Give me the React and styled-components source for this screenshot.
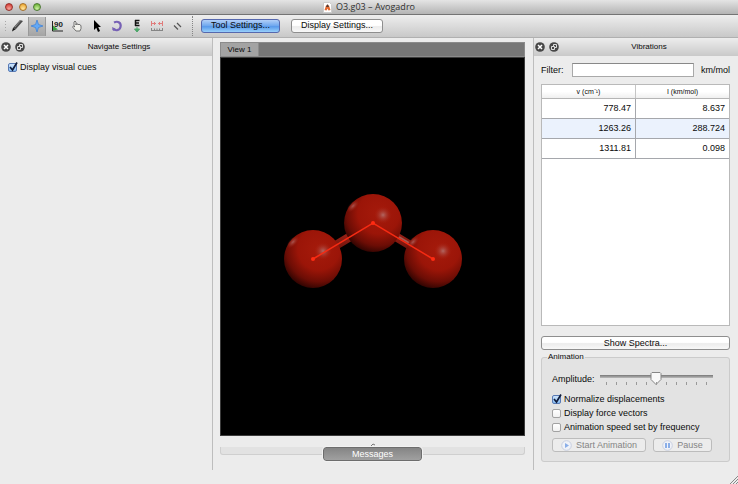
import React, { useState } from "react";
import styled, { createGlobalStyle, css } from "styled-components";

const GlobalStyle = createGlobalStyle`
  * { box-sizing: border-box; }
  body { margin: 0; background: #ececec; }
  body, button, input, table {
    font-family: "Liberation Sans", Arial, sans-serif;
    font-size: 9px;
    line-height: 12px;
    color: #0a0a0a;
  }
`;

const Window = styled.div`
  display: flex;
  flex-direction: column;
  min-height: 100vh;
  background: #ececec;
`;

const TitleBar = styled.header`
  display: grid;
  grid-template-columns: 1fr auto 1fr;
  align-items: center;
  height: 15px;
  padding: 0 5px;
  background: linear-gradient(#e4e4e4, #b4b4b4);
  border-bottom: 1px solid #747474;
`;

const Lights = styled.div`
  display: flex;
  gap: 6px;
`;

const lightColors = {
  close: ["#f6a79d", "#d8423b", "#96312b"],
  minimize: ["#ffe6a1", "#edaa35", "#a5702a"],
  zoom: ["#cdf2a4", "#72b63c", "#4d7b33"],
};

const Light = styled.button`
  width: 8px;
  height: 8px;
  padding: 0;
  border-radius: 50%;
  border: 1px solid ${(p) => lightColors[p.$kind][2]};
  background: radial-gradient(circle at 50% 80%, ${(p) => lightColors[p.$kind][0]}, ${(p) => lightColors[p.$kind][1]} 80%);
`;

const Title = styled.h1`
  display: flex;
  align-items: center;
  gap: 4px;
  margin: 0;
  font: 9px/14px "Open Sans", "Lucida Grande", sans-serif;
  color: #303030;
`;

const Toolbar = styled.div`
  display: flex;
  align-items: center;
  height: 23px;
  background: linear-gradient(#eeeeee, #c8c8c8);
  border-bottom: 1px solid #b0b0b0;
`;

const Grip = styled.span`
  width: 3px;
  height: 13px;
  margin: 0 1px 0 4px;
  background: radial-gradient(circle, #a8a8a8 1px, transparent 1px) 0 0 / 3px 3px;
`;

const Tool = styled.button`
  display: grid;
  place-items: center;
  width: 18px;
  height: 19px;
  margin-right: 2px;
  padding: 0;
  border: 0;
  background: ${(p) => (p.$active ? "linear-gradient(#c5c5c5, #a4a4a4)" : "none")};
  box-shadow: ${(p) => (p.$active ? "inset 1px 0 #999, inset -1px 0 #999" : "none")};
`;

const Separator = styled.span`
  height: 20px;
  margin: 0 8px 0 4px;
  border-left: 1px dotted #858585;
`;

const PushButton = styled.button`
  display: flex;
  align-items: center;
  justify-content: center;
  gap: 4px;
  height: 14px;
  padding: 0 9px 1px;
  border: 1px solid #8e8e8e;
  border-radius: 3px;
  background: linear-gradient(#ffffff 45%, #ececec 55%, #f8f8f8);
  white-space: nowrap;
  svg { flex: none; }
  ${(p) => p.$primary && css`
    border-color: #5668ad;
    background: linear-gradient(#b2cff7, #6ca6ee 50%, #589aeb 55%, #98d0fb);
  `}
  ${(p) => p.$wide && css`width: 100%;`}
  &:disabled {
    padding: 0 4px;
    color: #858585;
    border-color: #bcbcbc;
    background: #ececec;
  }
`;

const ToolbarButtons = styled.div`
  display: flex;
  gap: 11px;
  padding-bottom: 1px;
`;

const Workspace = styled.main`
  display: grid;
  grid-template-columns: 213px minmax(0, 1fr) 205px;
  flex: 1;
  margin-bottom: 14px;
`;

const Dock = styled.aside`
  display: flex;
  flex-direction: column;
  min-width: 0;
  ${(p) => (p.$side === "left" ? "border-right" : "border-left")}: 1px solid #bdbdbd;
`;

const DockTitle = styled.div`
  display: grid;
  grid-template-columns: 26px 1fr;
  align-items: center;
  height: 18px;
  padding-bottom: 1px;
  background: linear-gradient(#ededed, #c9c9c9);
`;

const DockButtons = styled.div`
  display: flex;
  gap: 4px;
  padding-left: 1px;
`;

const RoundButton = styled.button`
  display: grid;
  flex: none;
  width: 10px;
  height: 10px;
  padding: 0;
  border: 0;
  background: none;
`;

const DockName = styled.h2`
  margin: 0;
  font-size: 8px;
  font-weight: normal;
  line-height: 12px;
  text-align: center;
`;

const LeftBody = styled.div`
  padding: 4px 8px;
`;

const RightBody = styled.div`
  display: flex;
  flex-direction: column;
  flex: 1;
  padding: 7px 8px 8px 7px;
`;

const CheckLabel = styled.label`
  display: flex;
  align-items: center;
  gap: 3px;
  height: 14px;
  white-space: nowrap;
`;

const CheckBox = styled.span`
  display: grid;
  > * { grid-area: 1 / 1; }
  svg { pointer-events: none; overflow: visible; }
`;

const Check = styled.input`
  appearance: none;
  width: 9px;
  height: 9px;
  margin: 0;
  border: 1px solid #a2a2a2;
  border-radius: 2px;
  background: linear-gradient(#fff, #f1f1f1);
  &:checked {
    border-color: #587ab5;
    background: linear-gradient(#cfe4fb, #86bdf3);
  }
`;

const Center = styled.section`
  display: flex;
  flex-direction: column;
  min-width: 0;
  padding: 4px 8px 9px 7px;
`;

const TabBar = styled.div`
  display: flex;
  height: 15px;
  background: #777777;
  border: 1px solid #8b8b8b;
`;

const Tab = styled.button`
  width: 38px;
  padding: 0;
  border: 0;
  border-right: 1px solid #8c8c8c;
  background: #a3a3a3;
  font-size: 8px;
`;

const Viewport = styled.div`
  display: grid;
  flex: 1;
  background: #000;
  border: 1px solid #3c3c3c;
  svg { width: 100%; height: 100%; }
`;

const Collapser = styled.div`
  display: grid;
  place-items: center;
  height: 11px;
  padding-top: 6px;
`;

const MessagesBar = styled.div`
  display: flex;
  justify-content: center;
  align-items: flex-start;
  height: 8px;
  margin-bottom: 6px;
  background: #e2e2e2;
  border: 1px solid #cfcfcf;
  border-top: 0;
  border-radius: 0 0 3px 3px;
`;

const MessagesButton = styled.button`
  flex: none;
  width: 99px;
  height: 14px;
  padding: 0;
  border: 1px solid #6d6d6d;
  border-radius: 3px;
  background: linear-gradient(#858585, #a0a0a0);
  color: #fff;
  outline: 1px solid #f2f2f2;
`;

const FilterRow = styled.label`
  display: grid;
  grid-template-columns: 24px 1fr auto;
  gap: 7px;
  align-items: center;
`;

const FilterInput = styled.input`
  width: 100%;
  min-width: 0;
  height: 14px;
  border: 1px solid #a9a9a9;
  border-top-color: #888;
  background: #fff;
  padding: 0 2px;
`;

const TableFrame = styled.div`
  flex: 1;
  margin: 7px 0 10px;
  border: 1px solid #b9b9b9;
  background: #fff;
`;

const Table = styled.table`
  width: 100%;
  table-layout: fixed;
  border-collapse: collapse;
  th {
    height: 13px;
    padding: 0;
    font-size: 7px;
    line-height: 9px;
    font-weight: normal;
    background: linear-gradient(#fff 50%, #efefef);
    border-bottom: 1px solid #b5b5b5;
  }
  th + th { border-left: 1px solid #c5c5c5; }
  td {
    height: 20px;
    padding: 0 4px;
    text-align: right;
    border-bottom: 1px solid #a5a7ac;
  }
  td + td { border-left: 1px solid #a5a7ac; }
  tbody tr:nth-child(even) { background: #ebf2fd; }
`;

const Group = styled.fieldset`
  min-width: 0;
  margin: 2px 0 0;
  padding: 10px 8px 9px 10px;
  border: 1px solid #cbcbcb;
  border-radius: 3px;
  background: #e3e3e3;
`;

const Legend = styled.legend`
  padding: 0 1px;
  margin-left: -5px;
  font-size: 8px;
  line-height: 10px;
`;

const AmplitudeRow = styled.label`
  display: flex;
  align-items: center;
  gap: 5px;
  margin-bottom: 7px;
  padding-right: 8px;
`;

const SliderBox = styled.span`
  display: grid;
  flex: 1;
  min-width: 0;
`;

const Slider = styled.input`
  appearance: none;
  width: 100%;
  height: 13px;
  margin: 0;
  background: linear-gradient(#777, #bbb) center 3px / 100% 3px no-repeat;
  &::-webkit-slider-thumb {
    appearance: none;
    width: 12px;
    height: 13px;
    background: url("data:image/svg+xml,%3Csvg xmlns='http://www.w3.org/2000/svg' viewBox='0 0 12 13'%3E%3Cpath d='M2 .5h8l1 1v6L6 12.5 1 7.5v-6z' fill='%23f8f8f8' stroke='%23858585'/%3E%3C/svg%3E");
  }
`;

const Ticks = styled.span`
  display: flex;
  justify-content: space-between;
  margin-top: -3px;
  padding: 0 6px;
`;

const Tick = styled.i`
  width: 1px;
  height: 3px;
  background: #999;
`;

const ButtonRow = styled.div`
  display: grid;
  grid-template-columns: 94px 59px;
  gap: 7px;
  margin-top: 4px;
`;

const Resize = styled.svg`
  position: fixed;
  right: 0;
  bottom: 0;
`;

function Icon({ children }) {
  return <svg width="16" height="16" viewBox="0 0 16 16" fill="none">{children}</svg>;
}

const tools = [
  ["Draw", <Icon><path d="M4 10l7-8 3 1-7 8z" fill="#4a4a4a" /><path d="M6 9l6-7" stroke="#8a8a8a" /><path d="M4 10l3 1-4 2.500z" fill="#111" /></Icon>],
  ["Navigate", <Icon><path d="M8 2l1.500 4.500L14 8 9.500 9.500 8 14 6.500 9.500 2 8l4.500-1.500z" fill="#64a9f5" stroke="#3b7fd7" strokeWidth=".7" /></Icon>],
  ["Bond centric", <Icon><path d="M3.500 3v10H14" stroke="#222" /><path d="M4 12.500l5-1-5-4z" fill="#39a641" /><text x="5" y="9" fontFamily="Liberation Sans" fontSize="8" fontWeight="bold" fill="#222">90</text></Icon>],
  ["Manipulate", <Icon><path d="M5 8V4l1-1 1 1v3-1h2v1l1-1 1 1 1 .5v3L11 13H7L3.500 9l1-1 1.500 1z" fill="#f2f2ed" stroke="#666" strokeWidth=".9" /></Icon>],
  ["Select", <Icon><path d="M5 2v10l2.300-2.200L9 14l2-1-1.800-4H12z" fill="#000" /></Icon>],
  ["Auto rotate", <Icon><path d="M5 4.500C9 2.500 12.500 5 11.500 9S6 13 4 10.500" stroke="#7761b5" strokeWidth="2.200" /><path d="M3 9l1 4 3-2z" fill="#7761b5" /></Icon>],
  ["Auto optimize", <Icon><path d="M6 2.500h4.500M6 5h4M6 7.500h4.500M6.500 2v6" stroke="#111" strokeWidth="1.500" /><path d="M8 9v3M5.500 11L8 14l2.500-3z" stroke="#4da76a" fill="#4da76a" /></Icon>],
  ["Measure", <Icon><path d="M2.500 3v5M13.500 3v5M3 5.500h4M9 5.500h4M5.500 4v3M10.500 4v3" stroke="#e07d7d" /><path d="M2 12.500h12M2.500 10v2M5.500 10.500v2M8 10.500v2M10.500 10.500v2M13.500 10v2" stroke="#858585" /></Icon>],
  ["Align", <Icon><path d="M5 7.500l4 4M8 5l4 4" stroke="#555" strokeWidth="1.200" /></Icon>],
];

function CheckItem({ label, initial = false }) {
  const [on, setOn] = useState(initial);
  return (
    <CheckLabel>
      <CheckBox>
        <Check type="checkbox" checked={on} onChange={() => setOn(!on)} />
        {on && <svg width="9" height="9" viewBox="0 0 9 9"><path d="M2 4l2.500 3L9 -.5" fill="none" stroke="#101c3c" strokeWidth="1.700" /></svg>}
      </CheckBox>
      {label}
    </CheckLabel>
  );
}

function DockHeader({ title }) {
  return (
    <DockTitle>
      <DockButtons>
        <RoundButton aria-label={"Close " + title}>
          <svg viewBox="0 0 10 10"><circle cx="5" cy="5" r="4.800" fill="#474747" /><path d="M3 3l4 4M7 3L3 7" stroke="#fff" strokeWidth="1.500" /></svg>
        </RoundButton>
        <RoundButton aria-label={"Float " + title}>
          <svg viewBox="0 0 10 10"><circle cx="5" cy="5" r="4.800" fill="#474747" /><path d="M4.500 4V2.500h3v3H6M2.500 4.500h3v3h-3z" fill="none" stroke="#eee" strokeWidth=".9" /></svg>
        </RoundButton>
      </DockButtons>
      <DockName>{title}</DockName>
    </DockTitle>
  );
}

const atoms = [[92, 201], [152, 165], [212, 201]];

function Molecule() {
  return (
    <svg viewBox="0 0 303 377" role="img" aria-label="Ozone molecule">
      <defs>
        <radialGradient id="atom" cx=".6" cy=".33" r=".72">
          <stop offset="0" stopColor="#a51a0b" />
          <stop offset=".5" stopColor="#9b1508" />
          <stop offset=".78" stopColor="#6c0d05" />
          <stop offset="1" stopColor="#260301" />
        </radialGradient>
        <radialGradient id="shine">
          <stop offset="0" stopColor="#b16762" />
          <stop offset="1" stopColor="#a51a0b" stopOpacity="0" />
        </radialGradient>
        <linearGradient id="bond" x1="0" y1="0" x2="0" y2="1">
          <stop offset="0" stopColor="#b32b1e" />
          <stop offset="1" stopColor="#570903" />
        </linearGradient>
      </defs>
      <path d="M92 201L152 165L212 201" fill="none" stroke="url(#bond)" strokeWidth="9" />
      <path d="M178 179l12 7" stroke="#a55a52" strokeWidth="2" />
      {atoms.map(([x, y]) => (
        <g key={x}>
          <circle cx={x} cy={y} r="29" fill="url(#atom)" />
          <circle cx={x + 10} cy={y - 8} r="9" fill="url(#shine)" />
          <ellipse cx={x - 20} cy={y - 17} rx="8" ry="4" transform={`rotate(-45 ${x - 20} ${y - 17})`} fill="url(#shine)" opacity=".8" />
        </g>
      ))}
      <path d="M92 201L152 165L212 201" fill="none" stroke="#f52b13" strokeWidth="1.500" />
      {atoms.map(([x, y]) => <circle key={x} cx={x} cy={y} r="2" fill="#ff2b12" />)}
    </svg>
  );
}

const rows = [["778.47", "8.637"], ["1263.26", "288.724"], ["1311.81", "0.098"]];

export default function App() {
  return (
    <>
      <GlobalStyle />
      <Window>
        <TitleBar>
          <Lights>
            <Light $kind="close" aria-label="Close" />
            <Light $kind="minimize" aria-label="Minimize" />
            <Light $kind="zoom" aria-label="Zoom" />
          </Lights>
          <Title>
            <svg width="9" height="11" viewBox="0 0 9 11"><path d="M.5 .5h6l2 2v8h-8z" fill="#fff" stroke="#ccc" /><path d="M1.500 8L3 3.500h3L7.500 8l-2 .5-1-2-1 2z" fill="#e46930" /><path d="M3 5l1-2.500h1L6 5z" fill="#583b30" /></svg>
            O3.g03 – Avogadro
          </Title>
        </TitleBar>
        <Toolbar>
          <Grip />
          {tools.map(([name, icon]) => <Tool key={name} aria-label={name} $active={name === "Navigate"}>{icon}</Tool>)}
          <Separator />
          <ToolbarButtons>
            <PushButton $primary>Tool Settings...</PushButton>
            <PushButton>Display Settings...</PushButton>
          </ToolbarButtons>
        </Toolbar>
        <Workspace>
          <Dock $side="left">
            <DockHeader title="Navigate Settings" />
            <LeftBody><CheckItem label="Display visual cues" initial /></LeftBody>
          </Dock>
          <Center>
            <TabBar><Tab>View 1</Tab></TabBar>
            <Viewport><Molecule /></Viewport>
            <Collapser><svg width="4" height="3" viewBox="0 0 4 3"><path d="M0 3l2-2 2 1" fill="none" stroke="#777" /></svg></Collapser>
            <MessagesBar><MessagesButton>Messages</MessagesButton></MessagesBar>
          </Center>
          <Dock $side="right">
            <DockHeader title="Vibrations" />
            <RightBody>
              <FilterRow>Filter:<FilterInput type="text" />km/mol</FilterRow>
              <TableFrame>
                <Table>
                  <thead><tr><th>v (cm⁻¹)</th><th>I (km/mol)</th></tr></thead>
                  <tbody>{rows.map(([v, i]) => <tr key={v}><td>{v}</td><td>{i}</td></tr>)}</tbody>
                </Table>
              </TableFrame>
              <PushButton $wide>Show Spectra...</PushButton>
              <Group>
                <Legend>Animation</Legend>
                <AmplitudeRow>
                  Amplitude:
                  <SliderBox>
                    <Slider type="range" min="0" max="100" defaultValue="50" />
                    <Ticks>{Array.from({ length: 11 }, (_, i) => <Tick key={i} />)}</Ticks>
                  </SliderBox>
                </AmplitudeRow>
                <CheckItem label="Normalize displacements" initial />
                <CheckItem label="Display force vectors" />
                <CheckItem label="Animation speed set by frequency" />
                <ButtonRow>
                  <PushButton disabled>
                    <svg width="11" height="11" viewBox="0 0 11 11"><circle cx="5.500" cy="5.500" r="4.800" fill="#f0f2f8" stroke="#c8cfe0" /><path d="M4 3l4 2.500L4 8z" fill="#8aaee8" /></svg>
                    Start Animation
                  </PushButton>
                  <PushButton disabled>
                    <svg width="11" height="11" viewBox="0 0 11 11"><circle cx="5.500" cy="5.500" r="4.800" fill="#f0f2f8" stroke="#c8cfe0" /><path d="M4 3v5M7 3v5" stroke="#8aaee8" strokeWidth="2" /></svg>
                    Pause
                  </PushButton>
                </ButtonRow>
              </Group>
            </RightBody>
          </Dock>
        </Workspace>
        <Resize width="8" height="8" viewBox="0 0 8 8"><path d="M0 8l8-8M3 8l5-5M6 8l2-2" stroke="#888" /></Resize>
      </Window>
    </>
  );
}
